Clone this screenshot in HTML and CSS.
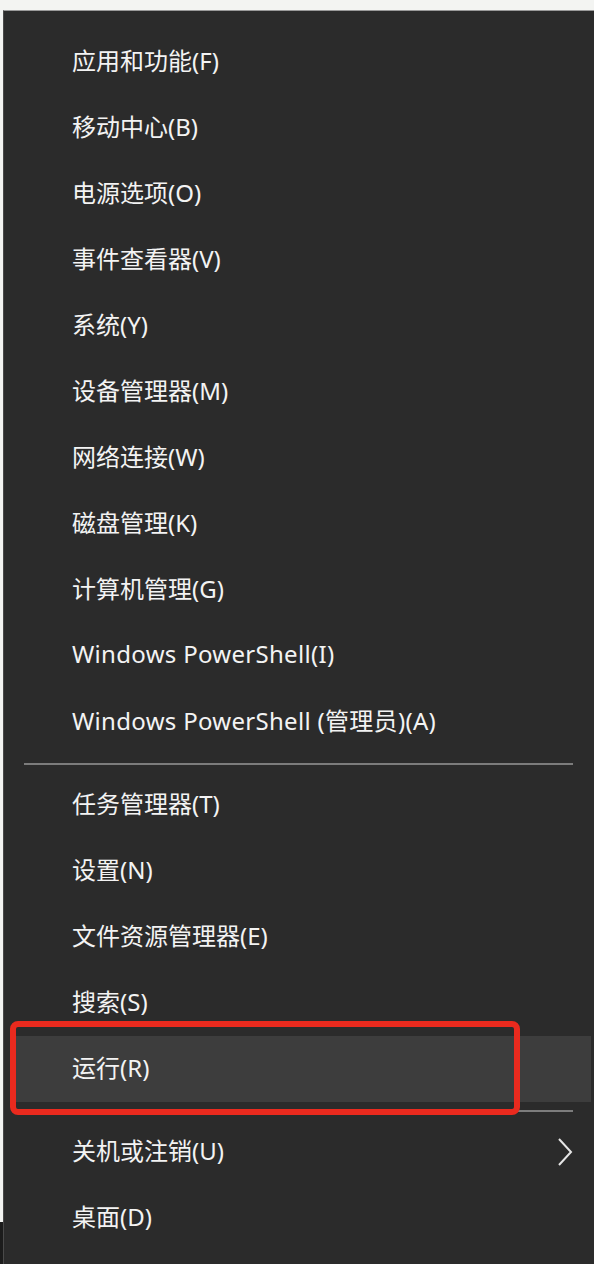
FILE: index.html
```html
<!DOCTYPE html>
<html lang="zh-CN">
<head>
<meta charset="utf-8">
<title>Win+X 菜单</title>
<link rel="stylesheet" href="styles.css">
</head>
<body>
<div class="screen">
  <div class="menu">
    <div class="item">应用和功能(F)</div>
    <div class="item">移动中心(B)</div>
    <div class="item">电源选项(O)</div>
    <div class="item">事件查看器(V)</div>
    <div class="item">系统(Y)</div>
    <div class="item">设备管理器(M)</div>
    <div class="item">网络连接(W)</div>
    <div class="item">磁盘管理(K)</div>
    <div class="item">计算机管理(G)</div>
    <div class="item latin">Windows PowerShell(I)</div>
    <div class="item latin">Windows PowerShell (管理员)(A)</div>
    <div class="sep"></div>
    <div class="item">任务管理器(T)</div>
    <div class="item">设置(N)</div>
    <div class="item">文件资源管理器(E)</div>
    <div class="item">搜索(S)</div>
    <div class="item active">运行(R)</div>
    <div class="sep"></div>
    <div class="item">关机或注销(U)
      <svg class="chev" width="16" height="28" viewBox="0 0 16 28"><polyline points="2,1 14,14 2,27" fill="none" stroke="#e6e6e6" stroke-width="2"/></svg>
    </div>
    <div class="item">桌面(D)</div>
  </div>
  <div class="mark"></div>
</div>
</body>
</html>
```

FILE: styles.css
```css
html, body {
  margin: 0;
  padding: 0;
}
body {
  width: 594px;
  height: 1264px;
  overflow: hidden;
  background: linear-gradient(#f3f4f2 0, #f3f4f2 1222px, #1c1c1c 1222px);
  font-family: "Noto Sans", "Noto Sans CJK SC", sans-serif;
}
.screen {
  position: relative;
  height: 1264px;
  box-sizing: border-box;
  padding: 10px 0 0 3px;
}
.menu {
  height: 1254px;
  background: #2b2b2b;
  border-top: 1px solid #9a9a9a;
  border-left: 1px solid #4a4a4a;
  padding-top: 18px;
  box-sizing: border-box;
  display: flex;
  flex-direction: column;
}
.item {
  height: 66px;
  box-sizing: border-box;
  flex: none;
  display: flex;
  align-items: center;
  padding: 0 21px 5px 68px;
  color: #f3f3f3;
  font-size: 24px;
  white-space: nowrap;
}
.item.latin {
  letter-spacing: 0.3px;
}
.item.active {
  background: #3d3d3d;
  margin-left: 8px;
  margin-right: 3px;
  padding-left: 60px;
}
.chev {
  margin-left: auto;
  margin-top: 5px;
}
.sep {
  height: 17px;
  flex: none;
  display: flex;
  align-items: flex-start;
  box-sizing: border-box;
  padding: 8px 21px 0 20px;
}
.sep::before {
  content: "";
  flex: 1;
  height: 2px;
  background: #7c7c7c;
}
.mark {
  position: absolute;
  left: 10px;
  top: 1021px;
  width: 510px;
  height: 94px;
  box-sizing: border-box;
  border: 6px solid #ea2a1e;
  border-radius: 8px;
}
```
